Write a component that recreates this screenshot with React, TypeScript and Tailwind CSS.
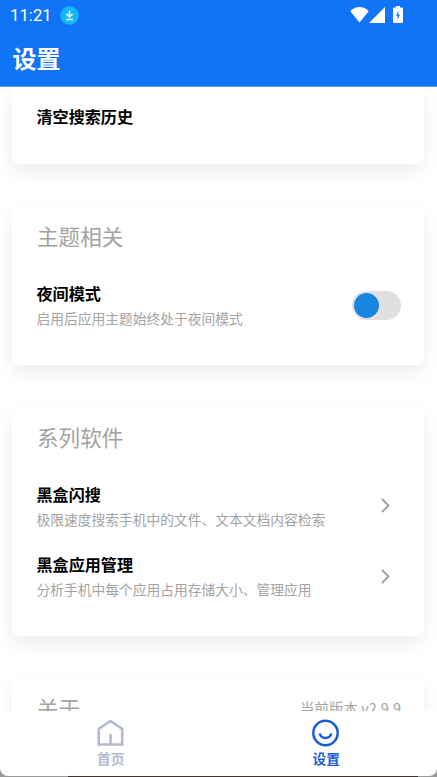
import React, { useState } from 'react'

function StatusBar() {
  return (
    <div className="h-[30px] flex items-center justify-between pl-[10px] pr-[34px]">
      <div className="flex items-center">
        <span className="w-[43px] text-[16.8px] leading-[30px] font-[Roboto] whitespace-nowrap">11:21</span>
        <svg width="19" height="19" viewBox="0 0 19 19" className="ml-[7px]">
          <circle cx="9.5" cy="9.5" r="9.3" fill="#10b9fc" />
          <path d="M9.5 4.5v6M6.5 8l3 3 3-3M6.2 13.5h6.6" stroke="#fff" strokeWidth="1.5" fill="none" />
        </svg>
      </div>
      <div className="flex items-center">
        {/* Wifi */}
        <svg width="19" height="16" viewBox="0 0 19 16" fill="#fff" className="-mt-px">
          <path d="M9.5 15.5 0.3 4.2Q4.5 0 9.5 0T18.7 4.2Z" />
        </svg>
        {/* Signal */}
        <svg width="16" height="16" viewBox="0 0 16 16" fill="#fff" className="-mt-px">
          <path d="M16 0v16H0Z" />
        </svg>
        {/* Battery */}
        <svg width="10" height="17" viewBox="0 0 10 17" className="ml-2 -mt-[2px]">
          <path d="M3 0h4v1.5h2q1 0 1 1V16q0 1-1 1H1q-1 0-1-1V2.500q0-1 1-1h2Z" fill="#fff" />
          <path d="M5.400 4.800 3 9.800h1.600v3.600L7 8.700H5.400Z" fill="#1173f6" />
        </svg>
      </div>
    </div>
  )
}

function Card({ title, extra, children }: { title: string; extra?: string; children?: React.ReactNode }) {
  return (
    <section className="bg-white rounded-lg shadow-[0_8px_20px_rgba(0,0,0,0.075)] pl-[24.5px] pr-6 pt-[13px] pb-[35.5px]">
      <div className="flex items-center justify-between">
        <h2 className="pl-[0.5px] text-[21.6px] leading-[34px] text-[#a3a3a3]">{title}</h2>
        {extra && <span className="text-[14.5px] text-[#a3a3a3] mr-[-1px]">{extra}</span>}
      </div>
      {children}
    </section>
  )
}

function Item({ title, desc, children }: { title: string; desc: string; children?: React.ReactNode }) {
  return (
    <div className="flex items-center justify-between">
      <div>
        <h3 className="text-[16.1px] leading-6 font-bold text-black">{title}</h3>
        <p className="mt-[2px] text-[13.75px] leading-[22px] text-[#a3a3a3]">{desc}</p>
      </div>
      {children}
    </div>
  )
}

function Chevron() {
  return (
    <svg width="9" height="15" viewBox="0 0 9 15" fill="none" className="mr-[10px]">
      <path d="M1 1l6.500 6.500L1 14" stroke="#a0a0a0" strokeWidth="1.900" />
    </svg>
  )
}

export default function App() {
  const [night, setNight] = useState(false)

  return (
    <div className="h-[777px] w-full flex flex-col overflow-hidden bg-white font-['Noto_Sans_CJK_SC',sans-serif]">
      <header className="h-[87px] shrink-0 bg-[#1173f6] border-b border-[#5c9ff5] text-white">
        <StatusBar />
        <h1 className="pl-[12.5px] pt-[10px] text-[24px] leading-9 font-bold">设置</h1>
      </header>

      <main className="flex-1 min-h-0 overflow-hidden px-3 pr-[13px] flex flex-col gap-[42px] *:shrink-0">
        <section className="h-[77px] bg-white rounded-b-lg shadow-[0_8px_20px_rgba(0,0,0,0.075)] px-[24.5px] pt-[17px]">
          <h3 className="text-[16.1px] leading-6 font-bold text-black">清空搜索历史</h3>
        </section>

        <Card title="主题相关">
          <div className="mt-[28px]">
            <Item title="夜间模式" desc="启用后应用主题始终处于夜间模式">
              <button
                aria-label="夜间模式"
                onClick={() => setNight(!night)}
                className={`w-[49px] h-[29px] rounded-full bg-[#e0e0e0] flex items-center px-[2px] mr-[-1px] ${night ? 'justify-end' : ''}`}
              >
                <span className="size-[25px] rounded-full bg-[#1784df]" />
              </button>
            </Item>
          </div>
        </Card>

        <Card title="系列软件">
          <div className="mt-[28px] flex flex-col gap-[22.5px]">
            <Item title="黑盒闪搜" desc="极限速度搜索手机中的文件、文本文档内容检索"><Chevron /></Item>
            <Item title="黑盒应用管理" desc="分析手机中每个应用占用存储大小、管理应用"><Chevron /></Item>
          </div>
        </Card>

        <Card title="关于" extra="当前版本 v2.9.9" />
      </main>

      <div className="h-[66px] shrink-0 bg-white relative">
        {/* Strip of the window behind the rounded bottom edge */}
        <div className="absolute inset-x-0 bottom-0 h-2 bg-[#9a9a9a] pl-[68px] pr-[19px]">
          <div className="h-2 bg-[#40342f]" />
        </div>
        <nav className="h-[65px] relative grid grid-cols-2 bg-white rounded-b-lg text-[13.7px] leading-5 font-bold">
          <a className="flex flex-col items-center pt-[8px] pl-[3px] text-[#b2bad2]">
            <svg width="28" height="28" viewBox="0 0 28 28" fill="none" stroke="currentColor" strokeWidth="2.600">
              <path d="M1.700 25.500V10L13.500 2l11.700 8v15.500ZM13.500 15v10.500" />
            </svg>
            <span className="mt-[1px]">首页</span>
          </a>
          <a className="flex flex-col items-center pt-[8px] pr-[3px] text-[#1a5cd5]">
            <svg width="28" height="28" viewBox="0 0 28 28" fill="none" stroke="currentColor" strokeWidth="2.500">
              <circle cx="13.500" cy="14" r="12.200" />
              <path d="M7.700 14.500a6 6 0 0 0 11.600 0" />
            </svg>
            <span className="mt-[1px]">设置</span>
          </a>
        </nav>
      </div>
    </div>
  )
}
